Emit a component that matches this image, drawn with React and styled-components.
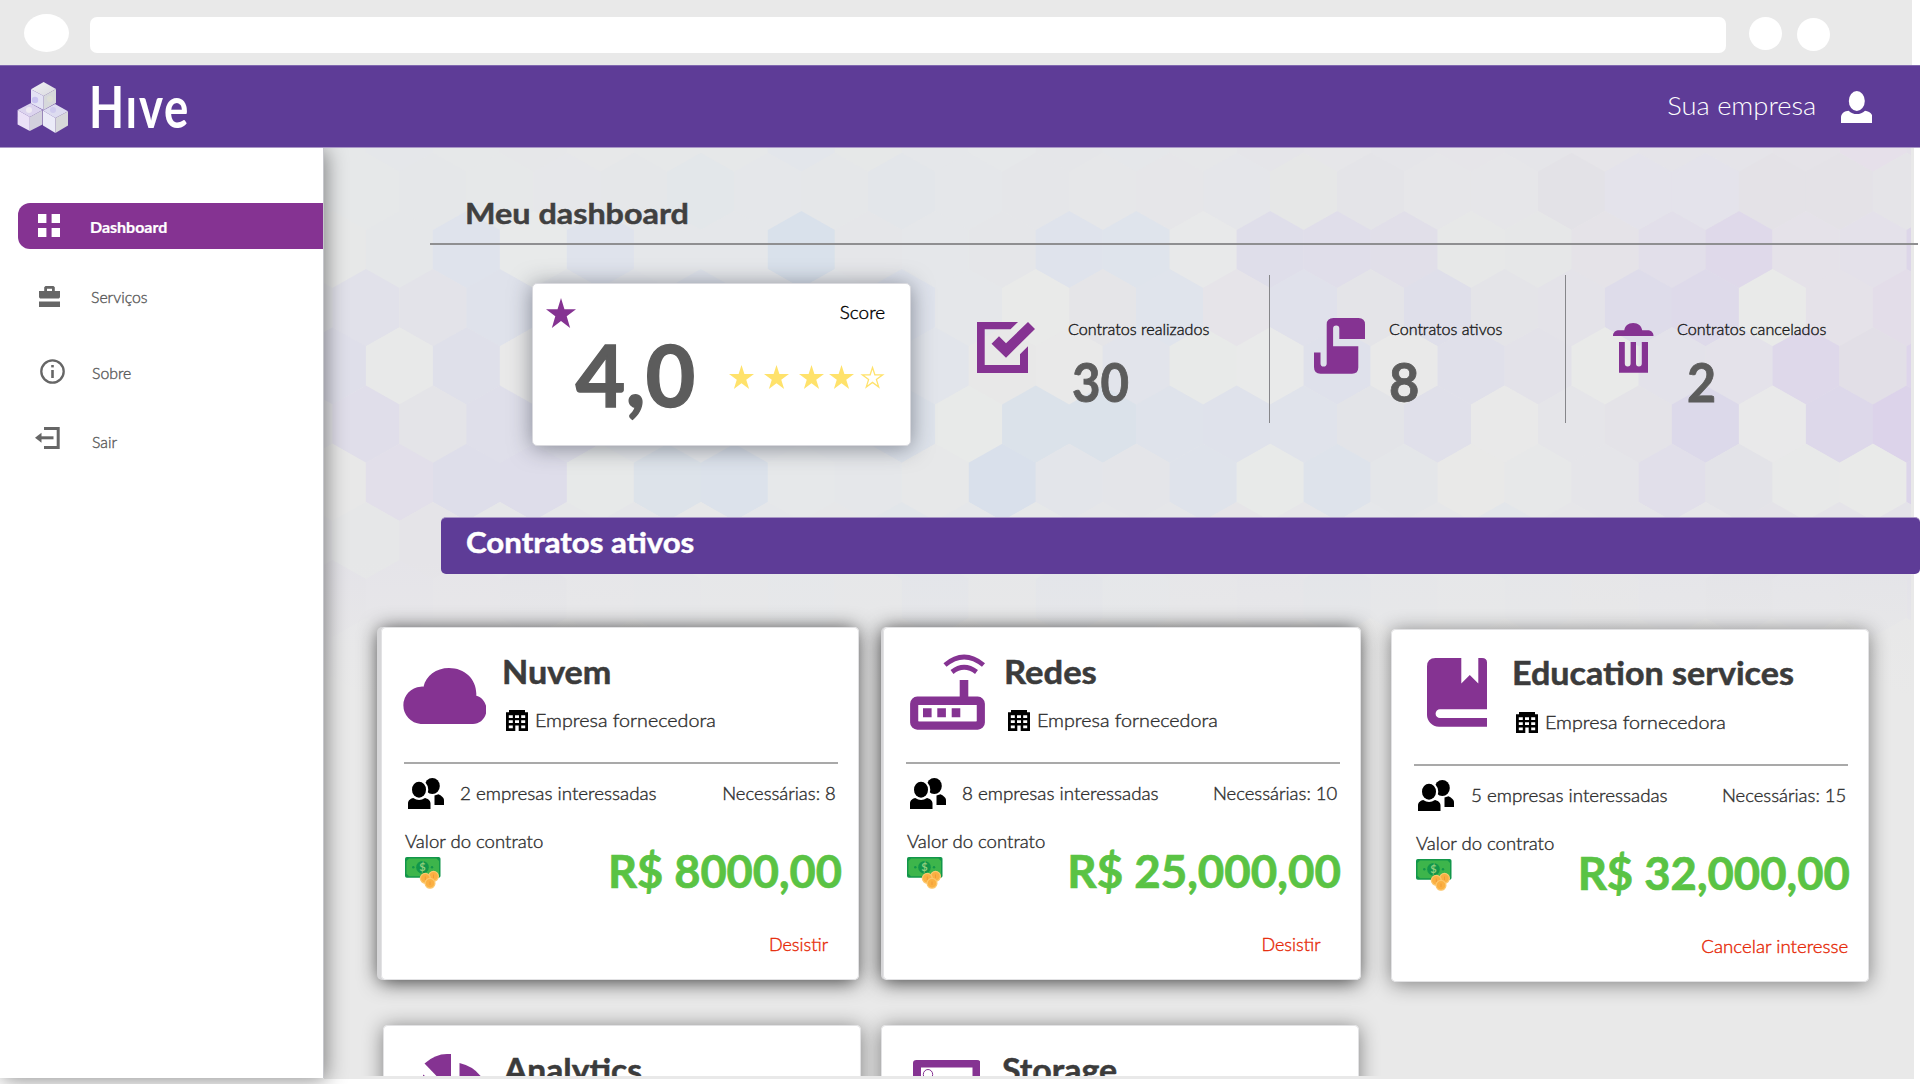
import React from "react";
import styled, { createGlobalStyle } from "styled-components";

const purple = "#853392";
const indigo = "#5e3c97";

const GlobalStyle = createGlobalStyle`
  body {
    margin: 0;
    background: #fff;
    font-family: Lato, "Liberation Sans", sans-serif;
  }
  svg { display: block; }
`;

const Page = styled.div`
  display: flex;
  flex-direction: column;
  width: 1920px;
  height: 1084px;
  overflow: hidden;
  background: #fff;
`;

const strokeFor = (p) => (p.$thin ? 0 : p.$bold ? p.$size * 0.016 : 0.38);

const Label = styled.span`
  display: block;
  flex: none;
  font-size: ${(p) => p.$size}px;
  font-weight: ${(p) => (p.$bold ? 700 : 300)};
  line-height: 1;
  white-space: nowrap;
  color: ${(p) => p.$color || "#303030"};
  -webkit-text-stroke: ${(p) => strokeFor(p)}px currentColor;
  transform: scaleX(${(p) => p.$stretch || 1});
  transform-origin: ${(p) => (p.$end ? "right" : "left")} center;
`;

/* ---------- browser chrome ---------- */

const BrowserBar = styled.div`
  display: flex;
  align-items: flex-start;
  flex: none;
  box-sizing: border-box;
  width: 1912px;
  height: 65px;
  padding: 14px 0 0 24px;
  background: #e9e9e9;
`;
const BackButton = styled.div`
  width: 45px;
  height: 38px;
  border-radius: 50%;
  background: #fff;
`;
const AddressField = styled.div`
  width: 1636px;
  height: 36px;
  margin: 3px 23px 0 21px;
  border-radius: 7px;
  background: #fff;
`;
const RoundButton = styled.div`
  width: 33px;
  height: 33px;
  margin: ${(p) => p.$drop}px 15px 0 0;
  border-radius: 50%;
  background: #fff;
`;

/* ---------- header ---------- */

const Header = styled.header`
  display: flex;
  align-items: flex-start;
  flex: none;
  box-sizing: border-box;
  height: 83px;
  padding: 16px 48px 0 17px;
  border-top: 1px solid #8068af;
  border-bottom: 1px solid #a997c6;
  background: ${indigo};
`;
const Brand = styled.span`
  flex: 1;
  margin: -4.5px 0 0 20.5px;
  font-size: 57px;
  font-weight: 700;
  line-height: 1;
  letter-spacing: 2.2px;
  color: #fff;
  transform: scaleX(0.8);
  transform-origin: left center;
`;
const Account = styled.div`
  display: flex;
  align-items: flex-start;
  gap: 24.5px;
  padding-top: 9px;
`;
const AccountName = styled.div`
  padding-top: 2px;
`;

/* ---------- sidebar ---------- */

const Body = styled.div`
  display: flex;
  align-items: flex-start;
  flex: 1;
`;
const Sidebar = styled.nav`
  position: relative;
  z-index: 2;
  box-sizing: border-box;
  flex: none;
  width: 324px;
  height: 930px;
  padding: 54.5px 0 0 17.5px;
  border-right: 1px solid #c6c7cc;
  background: #fff;
  box-shadow: 2px 2px 20px rgba(0, 0, 0, 0.45);
  clip-path: inset(0 -40px -40px 0);
`;
const NavItem = styled.div`
  display: flex;
  align-items: center;
  height: 46px;
  margin-bottom: ${(p) => p.$after || 0}px;
  border-radius: 12px 0 0 12px;
  background: ${(p) => (p.$active ? purple : "transparent")};
`;
const NavIcon = styled.div`
  box-sizing: border-box;
  width: 73.5px;
  padding-left: ${(p) => p.$indent}px;
`;
const NavText = styled.div`
  padding-top: ${(p) => p.$drop}px;
  margin-left: ${(p) => p.$shift || 0}px;
`;

/* ---------- main area ---------- */

const Main = styled.main`
  position: relative;
  flex: none;
  width: 1596px;
  height: 928px;
`;
const Backdrop = styled.div`
  position: absolute;
  inset: 0 auto auto 0;
  width: 1590px;
  height: 931px;
  overflow: hidden;
  background: #e9e9e9;
`;
const Content = styled.div`
  position: relative;
  display: flex;
  flex-direction: column;
  height: 928px;
  overflow: hidden;
`;
const Heading = styled.h1`
  flex: none;
  margin: 50px 0 0 141px;
`;
const Rule = styled.hr`
  flex: none;
  width: 1488px;
  height: 2px;
  margin: 16px 0 0 106px;
  border: 0;
  background: #8f8f91;
`;
const Summary = styled.section`
  display: flex;
  align-items: flex-start;
  flex: none;
  height: 272px;
  padding-left: 208px;
`;

const ScoreCard = styled.div`
  box-sizing: border-box;
  width: 379px;
  height: 163px;
  margin-top: 38px;
  border: 1px solid #d9d9de;
  border-radius: 5px;
  background: #fff;
  box-shadow: 0 2px 22px rgba(40, 45, 60, 0.5);
`;
const ScoreHead = styled.div`
  display: flex;
  justify-content: space-between;
  height: 45px;
  box-sizing: border-box;
  padding: 14px 25px 0 13px;
`;
const ScoreCaption = styled.div`
  padding-top: 5px;
`;
const ScoreBody = styled.div`
  display: flex;
  padding: 2px 0 0 42.5px;
`;
const ScoreValue = styled.div`
  width: 153px;
`;
const Stars = styled.div`
  display: flex;
  padding-top: 34px;
`;
const StarSlot = styled.div`
  margin-right: ${(p) => p.$after}px;
`;

const Stat = styled.div`
  display: grid;
  grid-template-columns: ${(p) => p.$iconColumn}px auto;
  justify-content: start;
  box-sizing: border-box;
  width: ${(p) => p.$width}px;
  height: 148px;
  margin-top: 30px;
  padding-left: ${(p) => p.$indent}px;
  border-left: ${(p) => (p.$divided ? "1px solid #86868a" : "0")};
`;
const StatIcon = styled.div`
  padding-top: ${(p) => p.$drop}px;
`;
const StatText = styled.div`
  display: flex;
  flex-direction: column;
  gap: 18.5px;
  padding-top: 46.7px;
`;
const StatValue = styled.div`
  padding-left: ${(p) => p.$indent}px;
`;

const Banner = styled.h2`
  flex: none;
  box-sizing: border-box;
  height: 57px;
  margin: 0 0 0 116.5px;
  padding: 9.8px 0 0 25.5px;
  border-top: 1px solid #a997c6;
  border-radius: 5px;
  background: ${indigo};
`;

/* ---------- contract cards ---------- */

const CardRow = styled.div`
  display: flex;
  align-items: flex-start;
  flex: none;
  height: 353px;
  margin-top: ${(p) => p.$before}px;
  padding-left: ${(p) => p.$indent}px;
`;
const Card = styled.article`
  box-sizing: border-box;
  flex: none;
  width: 478px;
  height: 353px;
  margin: ${(p) => p.$drop || 0}px ${(p) => p.$after || 0}px 0 0;
  border-radius: 5px;
  background: #fff;
  box-shadow:
    inset 0 0 0 1px #e2e2e4,
    ${(p) => (p.$edge ? `-${p.$edge}px 0 0 #d6d6d8,` : "")}
    -${(p) => (p.$edge ? 2 : 0)}px 2px 20px rgba(0, 0, 0, ${(p) => (p.$edge ? 0.76 : 0.46)});
`;
const CardHead = styled.div`
  display: grid;
  grid-template-columns: 121.3px auto;
  justify-content: start;
  height: 135px;
`;
const CardIcon = styled.div`
  padding: ${(p) => p.$y}px 0 0 ${(p) => p.$x}px;
`;
const CardTitle = styled.h3`
  margin: 28.5px 0 22.5px;
`;
const Supplier = styled.div`
  display: flex;
  gap: 7px;
  padding-left: 4px;
`;
const SupplierName = styled.div`
  padding-top: 1px;
`;
const CardRule = styled.hr`
  width: 434px;
  height: 2px;
  margin: 0 0 0 23.3px;
  border: 0;
  background: #a9a9a9;
`;
const Interest = styled.div`
  display: flex;
  align-items: center;
  height: 31px;
  padding: 14px 23px 0 27.3px;
`;
const InterestCount = styled.div`
  flex: 1;
  padding: 0 0 1px 16.5px;
`;
const Needed = styled.div`
  padding-bottom: 1px;
`;
const Value = styled.div`
  display: flex;
  justify-content: space-between;
  align-items: flex-start;
  height: 80px;
  padding: 0 ${(p) => p.$right}px 0 24.5px;
`;
const ValueCaption = styled.div`
  display: flex;
  flex-direction: column;
  gap: 7px;
  padding-top: 23px;
`;
const Price = styled.div`
  padding-top: 39px;
`;
const Action = styled.div`
  display: flex;
  justify-content: flex-end;
  padding: 46px ${(p) => p.$right}px 0 0;
`;

/* ---------- honeycomb ---------- */

const combRows = [
  { y: 94.5, odd: 0, from: -10, c: "e6e8e9 e5e7ea e6e8e9 e6e7e9 e7e8e9 e6e8e9 e6e8e9 e3e6eb e6e8e8 e5e7ea e6e8ea e5e6e9 e5e7ea e6e7e9 e5e5e9 e6e6e9 e5e5e9 e6e5e9 e5e5e9 e6e5e9 e5e4e9 e5e4e9 e5e3e8 e6e0ea e4e0e9" },
  { y: 152.7, odd: 1, from: -11, c: "e6e8e9 e6e8e9 e5e7e9 e6e8e9 e6e7ea e5e7e9 e3e7ea e5e7ea e5e7e9 e3e6ea e5e7ea e5e6e9 e6e7e9 e6e6e9 e5e6ea e6e7e7 e4e4e8 e6e6e9 e6e6e9 e3e2e7 e4e3eb e4e3eb e4e2e7 e4e2e7 e5e4e8" },
  { y: 210.9, odd: 0, from: -10, c: "e7e8e8 e5e7e9 dfe3ec e8eaea dfe3ec e5e7ea e5e7ea d9e1eb e5e6e9 e5e7ea e5e6e9 dfe3ec dfe4ec e8e9ea dfdeea e0deea e1dfe9 e7e8e8 e6e7e8 e5e3e8 e2dfea dfd9ea e5e2e9 e4e1ea ddd6e9" },
  { y: 269, odd: 1, from: -11, c: "e4e5e9 e1e1ea e3e3e9 dfe2eb e5e7ea e4e6ea dfe3eb e5e7ea e5e7ea dfe3ec e5e7ea e9eae9 e5e5e8 e0e4ec e6e4e9 e0e1eb e4e4e8 dfdfea e4e4e8 e4e3e9 dedcea dedaea e9eae9 e5e2e9 e3dde9" },
  { y: 327.3, odd: 0, from: -10, c: "dfdfea e8e9e9 dfe0ea e9e9e9 e0e3ea e0e3ea e5e7ea e5e7ea e0e4eb e2e5eb e8e8e8 e9e9e9 e2e4eb e8eae9 e9eaea dfe1eb e9e9e9 e0e0ea e3e2e9 e9eae9 e3e2ea e4e2ea ded8ea e2dfe7 ded5eb" },
  { y: 385.5, odd: 1, from: -11, c: "e5e5e9 e0deea e4e4e8 dfdfea e0e0ea e5e7ea e5e7ea e5e7ea e5e7ea dee3eb e8eae9 dbe2ea dbe2ea dfe3eb dfe2eb e0e3eb e3e4e8 e0e0ea e9e9e9 e5e5e9 e4e3e8 dcd9ea e9e9ea ddd8ea dcd3ea" },
  { y: 443.7, odd: 0, from: -10, c: "e8e8e8 e2dfea dedeea deddea e7e9e9 dde3ea dce2eb e6e8ea e5e7ea e7e8e9 d9e0eb e3e5ea e4e5e9 dfe3eb e8eae9 dee3eb e4e6e9 e9e9e8 e7e8e9 e5e5e9 e1dfea e3e3e8 e8e9e9 e9eae9 dcd5ea" },
  { y: 502, odd: 1, from: -11, c: "e6e6e9 e6e7e8 e5e4e8 e6e7e9 e6e7e9 e5e6e9 e7e8e9 e5e7ea e6e7e9 e2e6ea e5e7ea e6e8e9 e5e6e9 e5e6e9 e6e5e8 e6e6e9 e5e7ea e6e7e9 e3e6ea e6e6e9 e5e5e9 e6e6e9 e4e3e8 e5e4e9 e4e3e9" },
  { y: 560, odd: 0, from: -10, c: "e4e3e8 e5e4e9 e6e5e9 e4e4e8 e6e6e9 e5e6e9 e6e7e9 e5e7ea e6e7e9 e3e5ea e6e7e9 e3e5ea e5e7ea e6e6e9 e5e5e9 e3e5e9 e5e6e9 e6e7e9 e5e6e9 e6e6e8 e5e5e9 e4e4e8 e5e5e9 e4e4e8 e3e2e9" },
  { y: 618, odd: 1, from: -11, c: "e5e4e9 e6e6e9 e5e5e9 e6e6e9 e8e8e8 e8e8e8 e7e7e9 e7e7e9 e7e7e9 e7e7e9 e8e8e8 e7e7e8 e7e7e8 e8e8e8 e7e7e8 e7e7e8 e8e8e8 e7e7e8 e8e8e8 e7e7e8 e7e7e8 e8e8e8 e7e7e8 e8e8e8 e7e7e8" },
];

function Honeycomb() {
  return (
    <svg width="1587" height="931" viewBox="324 148 1587 931">
      <defs>
        <linearGradient id="fade" x1="0" y1="0" x2="0" y2="1">
          <stop offset="0" stopColor="#e9e9e9" stopOpacity="0" />
          <stop offset="1" stopColor="#e9e9e9" />
        </linearGradient>
      </defs>
      <rect x="324" y="148" width="1587" height="931" fill="#e9e9e9" />
      {combRows.map((row) =>
        row.c.split(" ").map((c, i) => {
          const x = (row.odd ? 1035.7 : 1002.3) + 66.98 * (row.from + i);
          const y = row.y;
          return (
            <path
              key={`${row.y}-${i}`}
              fill={`#${c}`}
              d={`M${x} ${y}L${x + 33.6} ${y + 19}V${y + 58.3}L${x} ${y + 77.4}L${x - 33.6} ${y + 58.3}V${y + 19}Z`}
            />
          );
        })
      )}
      <rect x="324" y="560" width="1587" height="140" fill="url(#fade)" />
    </svg>
  );
}

/* ---------- icons ---------- */

const Cubes = () => (
  <svg width="51" height="51" viewBox="0 0 51 51">
    <defs>
      <linearGradient id="lid" x1="0" y1="0" x2="1" y2="1">
        <stop offset="0" stopColor="#f1f0f6" />
        <stop offset="1" stopColor="#d9dade" />
      </linearGradient>
    </defs>
    <path fill="url(#lid)" d="M26.6 0L39 7 26.6 14 14 7.2z" />
    <path fill="#e3e2f4" d="M14 7.2L26.6 14v14L14 21.5z" />
    <path fill="#d6d8db" d="M39 7L26.6 14v14L39 21z" />
    <circle cx="18" cy="18" r="3.2" fill="#c9c3f0" />
    <circle cx="33" cy="17" r="3" fill="#dcded6" />
    <path fill="#dcd4ee" d="M13.5 21.2L25.5 28 12.8 35 .6 28z" />
    <path fill="#ebe1f7" d="M.6 28l12.2 7v14L.6 42.5z" />
    <path fill="#d3d1dd" d="M25.500 28l-12.700 7v14l12.700-6.500z" />
    <circle cx="12" cy="28" r="3" fill="#eeeaf2" />
    <path fill="#dddcf0" d="M38 22l13 7.2L38.4 36 26 28.6z" />
    <path fill="#ebebf8" d="M26 28.6L38.4 36v15L26 43.5z" />
    <path fill="#d7d8da" d="M51 29.2L38.4 36v15L51 43.5z" />
    <circle cx="36" cy="28" r="3" fill="#cfcbee" />
  </svg>
);

const UserIcon = () => (
  <svg width="31.5" height="32" viewBox="0 0 31.5 32" fill="#fff">
    <ellipse cx="15.8" cy="10" rx="8" ry="10" />
    <path d="M0 32v-5.5C0 22 4 20 7.6 19.7c4.6 4.5 11.8 4.5 16.4 0C27.5 20 31.5 22 31.5 26.5V32z" />
  </svg>
);

const GridIcon = () => (
  <svg width="22" height="23" viewBox="0 0 22 23" fill="#fff">
    <path d="M0 0h8.400v9H0zM13.600 0H22v9h-8.400zM0 14h8.400v9H0zM13.600 14H22v9h-8.400z" />
  </svg>
);

const BriefcaseIcon = () => (
  <svg width="21" height="21" viewBox="0 0 21 21" fill="#666">
    <path fillRule="evenodd" d="M6.500 0h8l1.300 1.300V5h5.200v6.300l-1 1.200H1l-1-1.200V5h5.200V1.300zM8 2.800V5h5V2.800z" />
    <path d="M0 15.500h21V21H0z" />
  </svg>
);

const InfoIcon = () => (
  <svg width="25" height="25" viewBox="0 0 25 25" fill="none" stroke="#666">
    <circle cx="12.500" cy="12.500" r="11.200" strokeWidth="2.300" />
    <path d="M12.500 11v8" strokeWidth="2.600" />
    <path d="M12.500 6v2.400" strokeWidth="2.600" />
  </svg>
);

const ExitIcon = () => (
  <svg width="25" height="22" viewBox="0 0 25 22">
    <path d="M9 1.500h14.200v19H9" fill="none" stroke="#666" strokeWidth="3" />
    <path d="M5.500 10.800H18.500" stroke="#666" strokeWidth="3" />
    <path d="M0 10.800l6.500-5v10z" fill="#666" />
  </svg>
);

const starPath = "M50 0L61.500 37H100L69 60 80.500 98 50 75 19.500 98 31 60 0 37H38.500z";
const Star = ({ size, height, color, hollow }) => (
  <svg width={size} height={height || size} viewBox="0 0 100 98" preserveAspectRatio="none">
    {hollow ? (
      <path d="M50 10L59.500 40H91L65.500 59 75 90 50 71 25 90 34.500 59 9 40H40.500z" fill="none" stroke={color} strokeWidth="5" />
    ) : (
      <path d={starPath} fill={color} />
    )}
  </svg>
);

const CheckIcon = () => (
  <svg width="58" height="51" viewBox="0 0 58 51" fill={purple}>
    <path d="M0 0h41l-7.500 7.300H7.700V43H43V32.300l8-8V51H0z" />
    <path d="M14.500 21.700l7.500-7.400 7 7L51 0l7 7-29 28.700z" />
  </svg>
);

const ScrollIcon = () => (
  <svg width="51" height="56" viewBox="0 0 51 56" fill={purple}>
    <path d="M19.500 0h25Q51 0 51 6.500V21H25.300V10.500a3.100 3.100 0 0 0-6.200 0v17.800h25.200v21.200q0 6.200-6.300 6.200H6.500Q0 55.700 0 49V34.500h6.500v11a3.100 3.100 0 0 0 6.200 0v-39Q12.700 0 19.500 0z" />
  </svg>
);

const TrashIcon = () => (
  <svg width="40.5" height="50" viewBox="0 0 40.5 50" fill={purple}>
    <path d="M0 13c0-4 3-5.700 6-5.700h5.300C12 3 15 0 20.200 0s8.200 3 9 7.300h5.300c3 0 6 1.700 6 5.700z" />
    <path d="M6 19h5.800v21.500a2.900 3 0 0 0 5.800 0V19h5.400v21.500a2.900 3 0 0 0 5.800 0V19h6.200v30.700H6z" />
  </svg>
);

const CloudIcon = () => (
  <svg width="84.5" height="56" viewBox="0 0 84.5 56" fill={purple}>
    <path d="M18.700 56a18.700 18.700 0 0 1 0-37.300q1.500-.2 2.800 0C24 8 34 0 47 0c15.500 0 27.300 11 27.300 25.500v2.300C80 29 84.500 35 84.500 41.500 84.500 50 78 56 71 56z" />
  </svg>
);

const RouterIcon = () => (
  <svg width="75" height="76" viewBox="0 0 75 76" fill="none" stroke={purple}>
    <rect x="4.300" y="46.800" width="66.400" height="24.700" rx="3" strokeWidth="8.400" />
    <rect x="8.500" y="51" width="58" height="16.300" fill="#fff" stroke="none" />
    <path d="M54 26v18" strokeWidth="8.600" />
    <path d="M13 58.700h8.600M27.300 58.700h8.600M41.700 58.700h8.600" strokeWidth="9" />
    <path d="M35 11Q54-5 73.500 11" strokeWidth="4.800" />
    <path d="M42 18q12-9.500 24.500 0" strokeWidth="4.800" />
  </svg>
);

const BookIcon = () => (
  <svg width="60" height="69" viewBox="0 0 60 69" fill={purple}>
    <path d="M8.500 0h25.800v25.500l8.500-8.500 8.500 8.500V0H55q5 0 5 4.500v46.800H13a4.400 4.400 0 0 0 0 8.800h47v8.600H12C5 68.700 0 63 0 57V8.500Q0 0 8.500 0z" />
  </svg>
);

const PieIcon = () => (
  <svg width="62" height="40" viewBox="0 0 62 40" fill={purple}>
    <path d="M1.500 9.500Q12 0 24 0h4v37z" />
    <path d="M36.500 9Q50 12 58 22.500q4 6 4 17.500H36.500z" />
    <path d="M0 20.500l2 1.500v6H0z" />
  </svg>
);

const StorageIcon = () => (
  <svg width="67.5" height="50" viewBox="0 0 67.5 50">
    <path fillRule="evenodd" fill={purple} d="M3.500 0H64q3.500 0 3.500 3v47H0V3q0-3 3.500-3zM8 7.500V50h51.500V7.500z" />
    <ellipse cx="15" cy="14.500" rx="4.700" ry="5" fill="none" stroke={purple} />
  </svg>
);

const BuildingIcon = () => (
  <svg width="22" height="21" viewBox="0 0 22 21">
    <path fill="#000" fillRule="evenodd" d="M3 0h16v2.300h3V21H0V2.300h3zM2.800 5.300v2.600h4V5.300zM9 5.300v2.600h4V5.300zM15.200 5.300v2.600h4V5.300zM2.800 10.300v2.600h4v-2.600zM9 10.300v2.600h4v-2.600zM15.200 10.300v2.600h4v-2.600zM2.800 15.500v2.800h4v-2.800zM15.200 15.500v2.800h4v-2.800zM9.300 15.500V21h3.400v-5.500z" />
  </svg>
);

const PeopleIcon = () => (
  <svg width="36" height="31" viewBox="0 0 36 31">
    <ellipse cx="24.300" cy="8" rx="7.500" ry="8" />
    <path d="M30.500 16.300c2.500 1.300 5.500 3 5.500 6.200V27h-9.500v-9.500z" />
    <ellipse cx="11" cy="11.700" rx="9.300" ry="10" fill="#fff" />
    <path d="M17 17.500c5 1.500 8 4.500 8 8.500v1.500h-5z" fill="#fff" />
    <ellipse cx="11" cy="11.700" rx="7" ry="8" />
    <path d="M0 31v-5.500C0 22 3 20.500 5.200 20q5.800 4 11.800 0c2.500.7 5.500 2 5.500 5.500V31z" />
  </svg>
);

const MoneyIcon = () => (
  <svg width="36" height="32" viewBox="0 0 36 32">
    <rect width="35.500" height="20.700" rx="1.800" fill="#12964a" />
    <path fill="#3db54b" d="M4 1.500h27.500L34 4v12.700l-2.500 2.500H4l-2.500-2.500V4z" />
    <circle cx="17.500" cy="10.300" r="6.300" fill="#12964a" />
    <circle cx="8.300" cy="10.300" r="1.200" fill="#12964a" />
    <circle cx="27" cy="10.300" r="1.200" fill="#12964a" />
    <text x="17.500" y="14.300" textAnchor="middle" fontFamily="Lato, sans-serif" fontWeight="700" fontSize="11" fill="#8fce7c">$</text>
    <g fill="#fbb042" stroke="#fcc76d" strokeWidth="1.300">
      <circle cx="28.500" cy="19.300" r="4.900" />
      <circle cx="20.300" cy="21.300" r="4.900" />
      <circle cx="25" cy="26.300" r="4.900" />
    </g>
    <path d="M28.500 17.500v3.500M20.300 19.500v3.500M25 24.500v3.500" stroke="#f09a38" strokeWidth="1" />
  </svg>
);

/* ---------- data ---------- */

const nav = [
  { text: "Dashboard", icon: <GridIcon />, indent: 20.5, drop: 3, after: 25, size: 14.8, stretch: 1.08, shift: -1, active: true },
  { text: "Serviços", icon: <BriefcaseIcon />, indent: 21.5, drop: 2, after: 28.5, size: 15.5, stretch: 1.02, shift: -0.5 },
  { text: "Sobre", icon: <InfoIcon />, indent: 22, drop: 6, after: 21, size: 15.5, stretch: 1.02, shift: 0.5 },
  { text: "Sair", icon: <ExitIcon />, indent: 17.5, drop: 10, size: 15.5, stretch: 1.02, shift: 0.5 },
];

const stats = [
  { text: "Contratos realizados", value: "30", icon: <CheckIcon />, width: 358, indent: 65.5, column: 91, drop: 47, valueIndent: 4, stretch: 1.075, valueStretch: 0.91 },
  { text: "Contratos ativos", value: "8", icon: <ScrollIcon />, width: 296, indent: 44, column: 75, drop: 43, valueIndent: 0, stretch: 1.07, valueStretch: 0.97, divided: true },
  { text: "Contratos cancelados", value: "2", icon: <TrashIcon />, width: 349, indent: 47, column: 63.5, drop: 48, valueIndent: 10, stretch: 1.075, valueStretch: 0.93, divided: true },
];

const contracts = [
  { title: "Nuvem", stretch: 1.065, icon: <CloudIcon />, x: 21, y: 40.5, count: 2, needed: 8, price: "R$ 8000,00", priceStretch: 1, priceRight: 16.5, action: "Desistir", actionRight: 30.5, edge: 4, after: 24 },
  { title: "Redes", stretch: 1.08, icon: <RouterIcon />, x: 27, y: 26.5, count: 8, needed: 10, price: "R$ 25,000,00", priceStretch: 1.01, priceRight: 19.5, action: "Desistir", actionRight: 40, edge: 2, after: 30.5 },
  { title: "Education services", stretch: 1.065, icon: <BookIcon />, x: 36, y: 29, count: 5, needed: 15, price: "R$ 32,000,00", priceStretch: 1.005, priceRight: 19.5, action: "Cancelar interesse", actionStretch: 1.04, actionRight: 20.5, drop: 1.5 },
];

const nextContracts = [
  { title: "Analytics", stretch: 1.05, icon: <PieIcon />, x: 40, y: 28.5, after: 19.5 },
  { title: "Storage", stretch: 1.06, icon: <StorageIcon />, x: 32, y: 34.5 },
];

function ContractSummary({ c }) {
  return (
    <>
      <CardRule />
      <Interest>
        <PeopleIcon />
        <InterestCount>
          <Label $size={18} $stretch={1.045}>{c.count} empresas interessadas</Label>
        </InterestCount>
        <Needed>
          <Label $size={18} $stretch={1.025} $end>Necessárias: {c.needed}</Label>
        </Needed>
      </Interest>
      <Value $right={c.priceRight}>
        <ValueCaption>
          <Label $size={18} $stretch={1.03}>Valor do contrato</Label>
          <MoneyIcon />
        </ValueCaption>
        <Price>
          <Label $size={45.2} $bold $color="#5ac344" $stretch={c.priceStretch} $end>{c.price}</Label>
        </Price>
      </Value>
      <Action $right={c.actionRight}>
        <Label $size={18} $color="#e62a08" $stretch={c.actionStretch} $end>{c.action}</Label>
      </Action>
    </>
  );
}

function ContractCard({ c }) {
  return (
    <Card $edge={c.edge} $after={c.after} $drop={c.drop}>
      <CardHead>
        <CardIcon $x={c.x} $y={c.y}>{c.icon}</CardIcon>
        <div>
          <CardTitle>
            <Label $size={32} $bold $color="#3b3b3b" $stretch={c.stretch}>{c.title}</Label>
          </CardTitle>
          {c.price && (
            <Supplier>
              <BuildingIcon />
              <SupplierName>
                <Label $size={18} $stretch={1.095}>Empresa fornecedora</Label>
              </SupplierName>
            </Supplier>
          )}
        </div>
      </CardHead>
      {c.price && <ContractSummary c={c} />}
    </Card>
  );
}

export default function App() {
  return (
    <Page>
      <GlobalStyle />
      <BrowserBar>
        <BackButton />
        <AddressField />
        <RoundButton $drop={3} />
        <RoundButton $drop={4} />
      </BrowserBar>
      <Header>
        <Cubes />
        <Brand>Hıve</Brand>
        <Account>
          <AccountName>
            <Label $size={25.5} $thin $color="#fff" $stretch={1.07} $end>Sua empresa</Label>
          </AccountName>
          <UserIcon />
        </Account>
      </Header>
      <Body>
        <Sidebar>
          {nav.map((n) => (
            <NavItem key={n.text} $active={n.active} $after={n.after}>
              <NavIcon $indent={n.indent}>{n.icon}</NavIcon>
              <NavText $drop={n.drop} $shift={n.shift}>
                <Label $size={n.size} $bold={n.active} $color={n.active ? "#fff" : "#5c5c5c"} $stretch={n.stretch}>{n.text}</Label>
              </NavText>
            </NavItem>
          ))}
        </Sidebar>
        <Main>
          <Backdrop>
            <Honeycomb />
          </Backdrop>
          <Content>
            <Heading>
              <Label $size={29} $bold $color="#404040" $stretch={1.115}>Meu dashboard</Label>
            </Heading>
            <Rule />
            <Summary>
              <ScoreCard>
                <ScoreHead>
                  <Star size={30} color={purple} />
                  <ScoreCaption>
                    <Label $size={18} $color="#000" $stretch={1.05} $end>Score</Label>
                  </ScoreCaption>
                </ScoreHead>
                <ScoreBody>
                  <ScoreValue>
                    <Label $size={86} $bold $color="#5c5c5c" $stretch={1.0}>4,0</Label>
                  </ScoreValue>
                  <Stars>
                    {[10, 10.5, 4.5, 6, 0].map((after, i) => (
                      <StarSlot key={i} $after={after}>
                        <Star size={25} height={24} color="#ffe26b" hollow={i === 4} />
                      </StarSlot>
                    ))}
                  </Stars>
                </ScoreBody>
              </ScoreCard>
              {stats.map((s) => (
                <Stat key={s.text} $width={s.width} $indent={s.indent} $iconColumn={s.column} $divided={s.divided}>
                  <StatIcon $drop={s.drop}>{s.icon}</StatIcon>
                  <StatText>
                    <Label $size={15} $color="#1c1c1c" $stretch={s.stretch}>{s.text}</Label>
                    <StatValue $indent={s.valueIndent}>
                      <Label $size={54} $bold $color="#5c5c5c" $stretch={s.valueStretch}>{s.value}</Label>
                    </StatValue>
                  </StatText>
                </Stat>
              ))}
            </Summary>
            <Banner>
              <Label $size={28.5} $bold $color="#fff" $stretch={1.095}>Contratos ativos</Label>
            </Banner>
            <CardRow $before={53} $indent={56.5}>
              {contracts.map((c) => <ContractCard key={c.title} c={c} />)}
            </CardRow>
            <CardRow $before={45} $indent={59}>
              {nextContracts.map((c) => <ContractCard key={c.title} c={c} />)}
            </CardRow>
          </Content>
        </Main>
      </Body>
    </Page>
  );
}
